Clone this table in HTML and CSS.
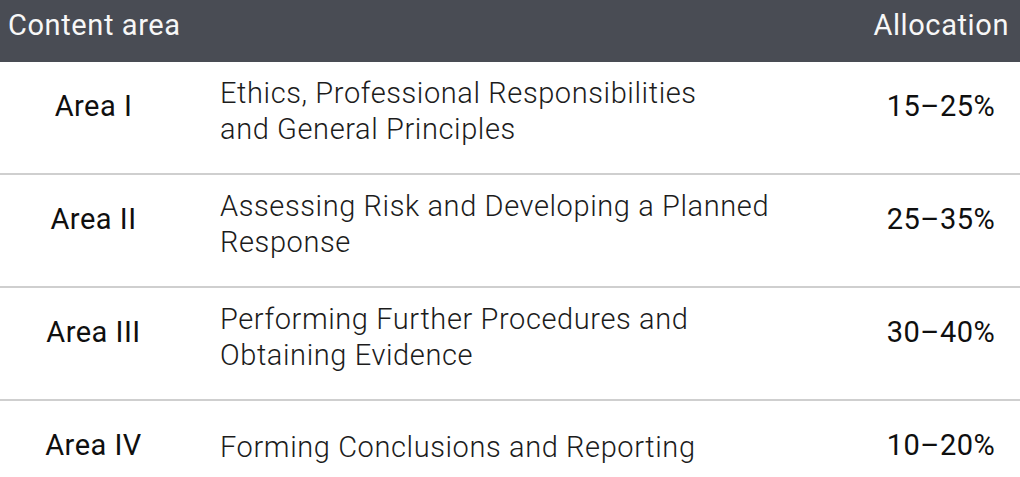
FILE: index.html
```html
<!DOCTYPE html>
<html lang="en">
<head>
<meta charset="utf-8">
<title>Content areas</title>
<link rel="stylesheet" href="styles.css">
</head>
<body>
<div class="table">
  <div class="head">
    <div class="head-left">Content area</div>
    <div class="head-right">Allocation</div>
  </div>
  <div class="row">
    <div class="area">Area I</div>
    <div class="desc">Ethics, Professional Responsibilities<br>and General Principles</div>
    <div class="pct">15–25%</div>
  </div>
  <div class="row">
    <div class="area">Area II</div>
    <div class="desc">Assessing Risk and Developing a Planned<br>Response</div>
    <div class="pct">25–35%</div>
  </div>
  <div class="row">
    <div class="area">Area III</div>
    <div class="desc">Performing Further Procedures and<br>Obtaining Evidence</div>
    <div class="pct">30–40%</div>
  </div>
  <div class="row">
    <div class="area">Area IV</div>
    <div class="desc single">Forming Conclusions and Reporting</div>
    <div class="pct">10–20%</div>
  </div>
</div>
</body>
</html>
```

FILE: styles.css
```css
* { box-sizing: border-box; }
html, body { margin: 0; padding: 0; background: #ffffff; }
body {
  font-family: Roboto, "Liberation Sans", Arial, sans-serif;
  color: #141414;
  overflow: hidden;
  letter-spacing: 0.5px;
}
.table { width: 1020px; height: 477px; overflow: hidden; }
.head {
  height: 62px;
  background: #494c54;
  color: #f7f7f7;
  display: flex;
  justify-content: space-between;
  align-items: flex-start;
  padding: 7px 11px 0 8px;
  font-size: 29px;
  line-height: 36px;
  font-weight: 400;
  letter-spacing: 0.6px;
}
.row {
  display: grid;
  grid-template-columns: 187px 1fr 158px;
  height: 113px;
  border-bottom: 2px solid #cfcfcf;
  font-size: 29px;
  line-height: 36px;
}
.area, .pct {
  display: flex;
  align-items: center;
  justify-content: center;
  padding-bottom: 24px;
  font-weight: 400;
  color: #0f0f0f;
}
.desc {
  display: flex;
  align-items: center;
  padding: 0 0 13px 33px;
  font-weight: 300;
  color: #1c1c1c;
  letter-spacing: 0.6px;
}
.desc.single { padding-bottom: 20px; }
```
